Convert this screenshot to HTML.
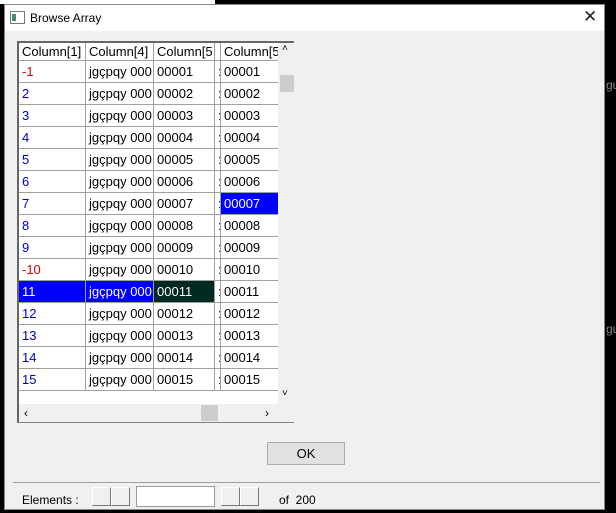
<!DOCTYPE html>
<html><head><style>
body{margin:0;width:616px;height:513px;background:#000;position:relative;overflow:hidden;font-family:"Liberation Sans",sans-serif;font-size:12px}
.dlg{position:absolute;left:4px;top:4px;width:601px;height:506px;background:#f0f0f0;border:1px solid #888;box-sizing:border-box}
.tb{position:absolute;left:0;top:0;width:599px;height:26px;background:#fff}
.a{position:absolute}
.grid{position:absolute;left:12px;top:36px;width:277px;height:382px;border:1px solid #828282;border-left:2px solid #666;border-top:2px solid #666;background:#fff;box-sizing:border-box;font-size:13px}
.c{position:absolute;height:21px;line-height:21px;border-right:1px solid #a0a0a0;border-bottom:1px solid #a0a0a0;box-sizing:border-box;padding-left:3px;white-space:nowrap;overflow:hidden}
.btn{position:absolute;background:#e1e1e1;border:1px solid #adadad;box-sizing:border-box}
.sb{position:absolute;border:1px solid;border-color:#fff #777 #777 #fff;background:#f0f0f0;box-sizing:border-box}
</style></head><body>
<div class="a" style="left:0;top:0;width:215px;height:4px;background:#fff"></div>
<div class="a" style="left:606px;top:78px;color:#888;font-size:12px">gu</div>
<div class="a" style="left:606px;top:322px;color:#888;font-size:12px">gu</div>
<div class="dlg">
<div class="tb">
<div class="a" style="left:5px;top:6px;width:13px;height:11px;border:1px solid #777;background:#fff"><div class="a" style="left:1px;top:2px;width:4px;height:7px;background:#4a8a7a"></div></div>
<div class="a" style="left:25px;top:6px;font-size:12px">Browse Array</div>
<div class="a" style="left:578px;top:2px;font-size:17px;color:#222">✕</div>
</div>
<div class="grid" id="g"></div>
<div class="btn" style="left:262px;top:437px;width:78px;height:23px;text-align:center;line-height:21px;font-size:13px">OK</div>
<div class="a" style="left:8px;top:477px;width:587px;height:1px;background:#a0a0a0"></div>
<div class="a" style="left:17px;top:488px">Elements :</div>
<div class="sb" style="left:87px;top:482px;width:19px;height:19px"></div>
<div class="sb" style="left:106px;top:482px;width:19px;height:19px"></div>
<div class="a" style="left:131px;top:481px;width:79px;height:21px;background:#fff;border:1px solid #999;box-sizing:border-box"></div>
<div class="sb" style="left:216px;top:482px;width:19px;height:19px"></div>
<div class="sb" style="left:235px;top:482px;width:19px;height:19px"></div>
<div class="a" style="left:274px;top:488px">of&nbsp; 200</div>
</div>
<script>
var g=document.getElementById('g'),h='';
var cols=[[0,67],[67,68],[135,61],[196,6],[202,58]];
var hd=['Column[1]','Column[4]','Column[5','','Column[5'];
cols.forEach(function(c,i){h+='<div class="c" style="left:'+c[0]+'px;top:0;width:'+c[1]+'px;height:18px;line-height:18px;background:#fff">'+hd[i]+'</div>'});
for(var r=1;r<=15;r++){var t=18+(r-1)*22,n=('0000'+r).slice(-5);
var neg=(r==1||r==10);var v=[neg?'-'+r:r,'jgçpqy 000',n,':',n];
cols.forEach(function(c,i){var st='left:'+c[0]+'px;top:'+t+'px;width:'+c[1]+'px;height:22px;line-height:22px;';
var col='#000';if(i==0)col=neg?'#d00':'#00c';
if(r==11&&i<2){st+='background:#0000ff;';col='#fff'}
if(r==11&&i==2){st+='background:#002a22;';col='#fff'}
if(r==7&&i==4){st+='background:#0000ff;';col='#fff'}
h+='<div class="c" style="'+st+'color:'+col+'">'+v[i]+'</div>'})}
h+='<div class="a" style="left:259px;top:0;width:16px;height:361px;background:#f0f0f0"></div>';
h+='<div class="a" style="left:263px;top:0;font-size:10px">˄</div><div class="a" style="left:261px;top:32px;width:14px;height:17px;background:#cdcdcd"></div><div class="a" style="left:263px;top:345px;font-size:10px">˅</div>';
h+='<div class="a" style="left:0;top:361px;width:275px;height:18px;background:#f0f0f0"></div><div class="a" style="left:5px;top:363px;font-size:12px">‹</div><div class="a" style="left:182px;top:362px;width:17px;height:16px;background:#cdcdcd"></div><div class="a" style="left:246px;top:363px;font-size:12px">›</div>';
g.innerHTML=h;
</script>
</body></html>
